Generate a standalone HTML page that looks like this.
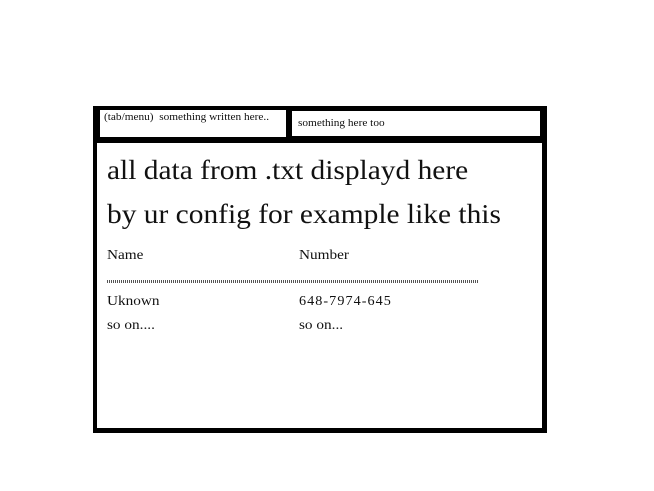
<!DOCTYPE html><html><head><style>
body{margin:0;width:654px;height:491px;background:#fff;position:relative;overflow:hidden;font-family:"Liberation Serif",serif;color:#111}
div{position:absolute}
.t{white-space:nowrap;transform-origin:0 0;transform:scaleX(1.13)}
.b{transform:scaleX(1.09)}
</style></head><body>
<div style="left:93px;top:106px;width:454px;height:327px;background:#000"></div>
<div style="left:100px;top:110px;width:186px;height:27px;background:#fff"></div>
<div style="left:292px;top:111px;width:248px;height:25px;background:#fff"></div>
<div style="left:97px;top:143px;width:445px;height:285px;background:#fff"></div>
<div class="t" style="left:104px;top:112px;font-size:10px">(tab/menu)&nbsp; something written here..</div>
<div class="t" style="left:298px;top:118px;font-size:10px">something here too</div>
<div class="t b" style="left:107px;top:155px;font-size:27px">all data from .txt displayd here</div>
<div class="t b" style="left:107px;top:199px;font-size:27px">by ur config for example like this</div>
<div class="t" style="left:107px;top:247px;font-size:13.5px">Name</div>
<div class="t" style="left:299px;top:247px;font-size:13.5px">Number</div>
<div style="left:107px;top:280px;width:372px;height:3px;background:repeating-linear-gradient(90deg,#555 0 1px,#fff 1px 2px)"></div>
<div class="t" style="left:107px;top:293px;font-size:13.5px">Uknown</div>
<div class="t" style="left:299px;top:293px;font-size:13.5px;letter-spacing:1px;transform:scaleX(1.05)">648-7974-645</div>
<div class="t" style="left:107px;top:317px;font-size:13.5px">so on....</div>
<div class="t" style="left:299px;top:317px;font-size:13.5px">so on...</div>
</body></html>
